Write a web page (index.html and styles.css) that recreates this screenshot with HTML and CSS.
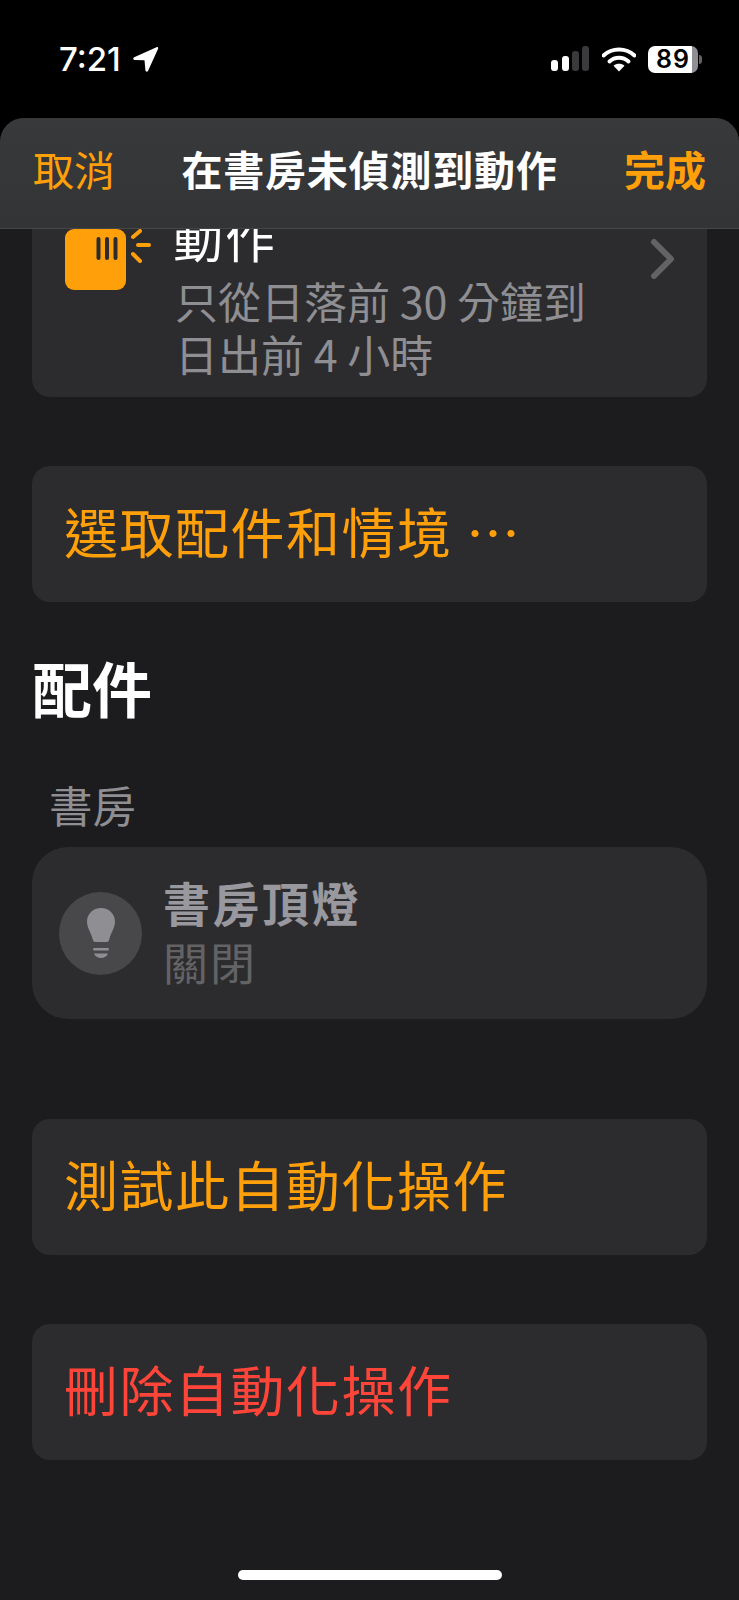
FILE: index.html
```html
<!DOCTYPE html>
<html lang="zh-Hant">
<head>
    <meta charset="UTF-8">
    <meta name="viewport" content="width=device-width, initial-scale=1.0">
    <title>在書房未偵測到動作</title>
    <link rel="stylesheet" href="styles.css">
</head>
<body>
    <div class="status-bar">
        <div class="status-left">
            <span class="clock">7:21</span>
            <svg class="location" width="27" height="26" viewBox="0 0 27 26"><path d="M24.5 1.2 2.2 11.2c-1.6.8-1.2 2.6.5 2.7l9.8.4.9 9.9c.2 1.6 2 2 2.7.5L26 3c.5-1.3-.3-2.2-1.5-1.8z" fill="#fff"/></svg>
        </div>
        <div class="status-right">
            <svg width="38" height="26" viewBox="0 0 38 26"><rect x="0" y="14" width="7" height="11" rx="3" fill="#fff"/><rect x="11" y="10" width="7" height="15" rx="3" fill="#fff"/><rect x="21" y="5" width="7" height="20" rx="3" fill="#3a3a3c"/><rect x="31" y="0" width="7" height="25" rx="3" fill="#3a3a3c"/></svg>
            <svg class="wifi" width="34" height="25" viewBox="0 0 34 25"><path d="M1.5 8.5C10 .5 24 .5 32.500 8.500" fill="none" stroke="#fff" stroke-width="4" stroke-linecap="round"/><path d="M7.500 14.500c5.500-5 13.500-5 19 0" fill="none" stroke="#fff" stroke-width="4" stroke-linecap="round"/><path d="M17 24.500 11.500 18.800c3.200-2.600 7.800-2.600 11 0z" fill="#fff"/></svg>
            <div class="battery">
                <div class="battery-body"><span>89</span></div>
                <div class="battery-cap"></div>
            </div>
        </div>
    </div>

    <div class="sheet">
        <div class="nav">
            <span class="nav-cancel">取消</span>
            <span class="nav-title">在書房未偵測到動作</span>
            <span class="nav-done">完成</span>
        </div>
        <div class="content">
            <div class="card trigger">
                <div class="motion-icon">
                    <svg width="86" height="61" viewBox="0 0 86 61">
                        <rect width="61" height="61" rx="9" fill="#ff9f0a"/>
                        <path d="M33.500 10v19M42 10v19M50.500 10v19" stroke="#2c2c2e" stroke-width="4" stroke-linecap="round"/>
                        <path d="M68 8l7-6M73 16h11M68 25l7 7" stroke="#ff9f0a" stroke-width="4" stroke-linecap="round" fill="none"/>
                    </svg>
                </div>
                <div class="trigger-text">
                    <div class="trigger-name">動作</div>
                    <div class="trigger-desc">只從日落前 30 分鐘到<br>日出前 4 小時</div>
                </div>
                <svg class="chevron" width="25" height="40" viewBox="0 0 25 40"><path d="M4 3l17 17L4 37" fill="none" stroke="#636366" stroke-width="6" stroke-linecap="round" stroke-linejoin="round"/></svg>
            </div>

            <div class="card action first">選取配件和情境 ⋯</div>

            <h2 class="section-title">配件</h2>
            <div class="room-label">書房</div>

            <div class="accessory">
                <div class="bulb">
                    <svg width="30" height="50" viewBox="0 0 30 50"><path d="M15 0C7 0 1 6 1 13.500c0 6 3.500 10 5.500 17 .5 2 1 3.500 2.500 3.500h12c1.500 0 2-1.500 2.500-3.500 2-7 5.500-11 5.500-17C29 6 23 0 15 0z" fill="#8e8e93"/><rect x="7" y="40" width="16" height="2.500" rx="1.200" fill="#8e8e93"/><path d="M8 45.500h14c-1 2.800-3.800 4.500-7 4.500s-6-1.700-7-4.500z" fill="#8e8e93"/></svg>
                </div>
                <div class="accessory-text">
                    <div class="accessory-name">書房頂燈</div>
                    <div class="accessory-state">關閉</div>
                </div>
            </div>

            <div class="card action test">測試此自動化操作</div>
            <div class="card action delete">刪除自動化操作</div>
        </div>
    </div>

    <div class="home-indicator"></div>
</body>
</html>
```

FILE: styles.css
```css
* {
    box-sizing: border-box;
}
html, body {
    height: 100%;
}
body {
    margin: 0;
    background-color: #000;
    font-family: "Noto Sans CJK TC", "Noto Sans", sans-serif;
    display: flex;
    flex-direction: column;
    overflow: hidden;
    position: relative;
}

/* status bar */
.status-bar {
    height: 118px;
    flex-shrink: 0;
    display: flex;
    justify-content: space-between;
    align-items: flex-start;
    padding: 45px 37px 0 59px;
}
.status-left {
    display: flex;
    align-items: center;
    gap: 11px;
    height: 28px;
}
.clock {
    color: #fff;
    font-family: Inter, sans-serif;
    font-size: 33px;
    font-weight: 500;
    line-height: 28px;
}
.status-right {
    display: flex;
    align-items: center;
    height: 28px;
}
.wifi {
    margin-left: 13px;
}
.battery {
    display: flex;
    align-items: center;
    margin-left: 12px;
}
.battery-body {
    width: 50px;
    height: 27px;
    border-radius: 7px;
    background: linear-gradient(to right, #fff 87%, #8e8e93 87%);
    display: flex;
    align-items: center;
    justify-content: center;
}
.battery-body span {
    font-family: Inter, sans-serif;
    font-size: 25px;
    font-weight: 600;
    color: #000;
    letter-spacing: 1px;
}
.battery-cap {
    width: 3px;
    height: 9px;
    margin-left: 1px;
    border-radius: 0 3px 3px 0;
    background-color: #636366;
}

/* sheet */
.sheet {
    flex: 1;
    display: flex;
    flex-direction: column;
    min-height: 0;
    background-color: #1c1c1e;
    border-radius: 24px 24px 0 0;
    overflow: hidden;
}
.nav {
    height: 111px;
    flex-shrink: 0;
    display: flex;
    align-items: center;
    justify-content: space-between;
    padding: 0 33px 11px 33px;
    background: linear-gradient(to bottom, #38393a, #333435);
    border-bottom: 1px solid #454647;
}
.nav-cancel, .nav-done {
    color: #ff9f0a;
    font-size: 41px;
    width: 82px;
}
.nav-done {
    font-weight: 700;
    text-align: right;
}
.nav-title {
    color: #fff;
    font-size: 41px;
    font-weight: 700;
    letter-spacing: 0.8px;
}
.content {
    flex: 1;
    min-height: 0;
    overflow: hidden;
    padding: 0 32px;
}

/* cards */
.card {
    background-color: #2c2c2e;
    border-radius: 18px;
}
.trigger {
    margin-top: -50px;
    height: 218px;
    display: flex;
    align-items: flex-start;
    padding: 50px 32px 0 33px;
}
.motion-icon {
    height: 61px;
    width: 110px;
    flex-shrink: 0;
}
.motion-icon svg {
    display: block;
}
.trigger-text {
    flex: 1;
    margin-top: -28px;
}
.trigger-name {
    color: #fff;
    font-size: 50px;
    letter-spacing: 2px;
    line-height: 70px;
    height: 73px;
    margin-left: -2px;
}
.trigger-desc {
    color: #8e8e93;
    font-size: 43px;
    line-height: 53px;
}
.chevron {
    margin-top: 10px;
}
.action {
    height: 136px;
    margin-top: 70px;
    padding: 0 32px 7px;
    display: flex;
    align-items: center;
    color: #ff9f0a;
    font-size: 54px;
    letter-spacing: 1.500px;
    line-height: 60px;
    white-space: nowrap;
}
.first {
    margin-top: 69px;
}
.section-title {
    margin: 45px 0 0;
    color: #fff;
    font-size: 60px;
    font-weight: 700;
    line-height: 80px;
}
.room-label {
    margin: 53px 0 0 17px;
    color: #8e8e93;
    font-size: 43.500px;
    line-height: 50px;
}
.accessory {
    margin-top: 17px;
    height: 172px;
    border-radius: 36px;
    background-color: #2c2c2e;
    display: flex;
    align-items: center;
    padding: 0 27px;
    gap: 21px;
}
.bulb {
    width: 83px;
    height: 83px;
    border-radius: 50%;
    background-color: #48484a;
    display: flex;
    align-items: center;
    justify-content: center;
    flex-shrink: 0;
}
.accessory-text {
    margin-top: -3px;
}
.accessory-name {
    color: #98989e;
    font-size: 47px;
    font-weight: 700;
    letter-spacing: 2.500px;
    line-height: 60px;
}
.accessory-state {
    color: #636366;
    font-size: 45px;
    letter-spacing: 2px;
    line-height: 60px;
}
.test {
    margin-top: 100px;
}
.delete {
    margin-top: 69px;
    color: #ff453a;
}

/* home indicator */
.home-indicator {
    position: absolute;
    left: 238px;
    bottom: 20px;
    width: 264px;
    height: 10px;
    border-radius: 5px;
    background-color: #fff;
}
```
